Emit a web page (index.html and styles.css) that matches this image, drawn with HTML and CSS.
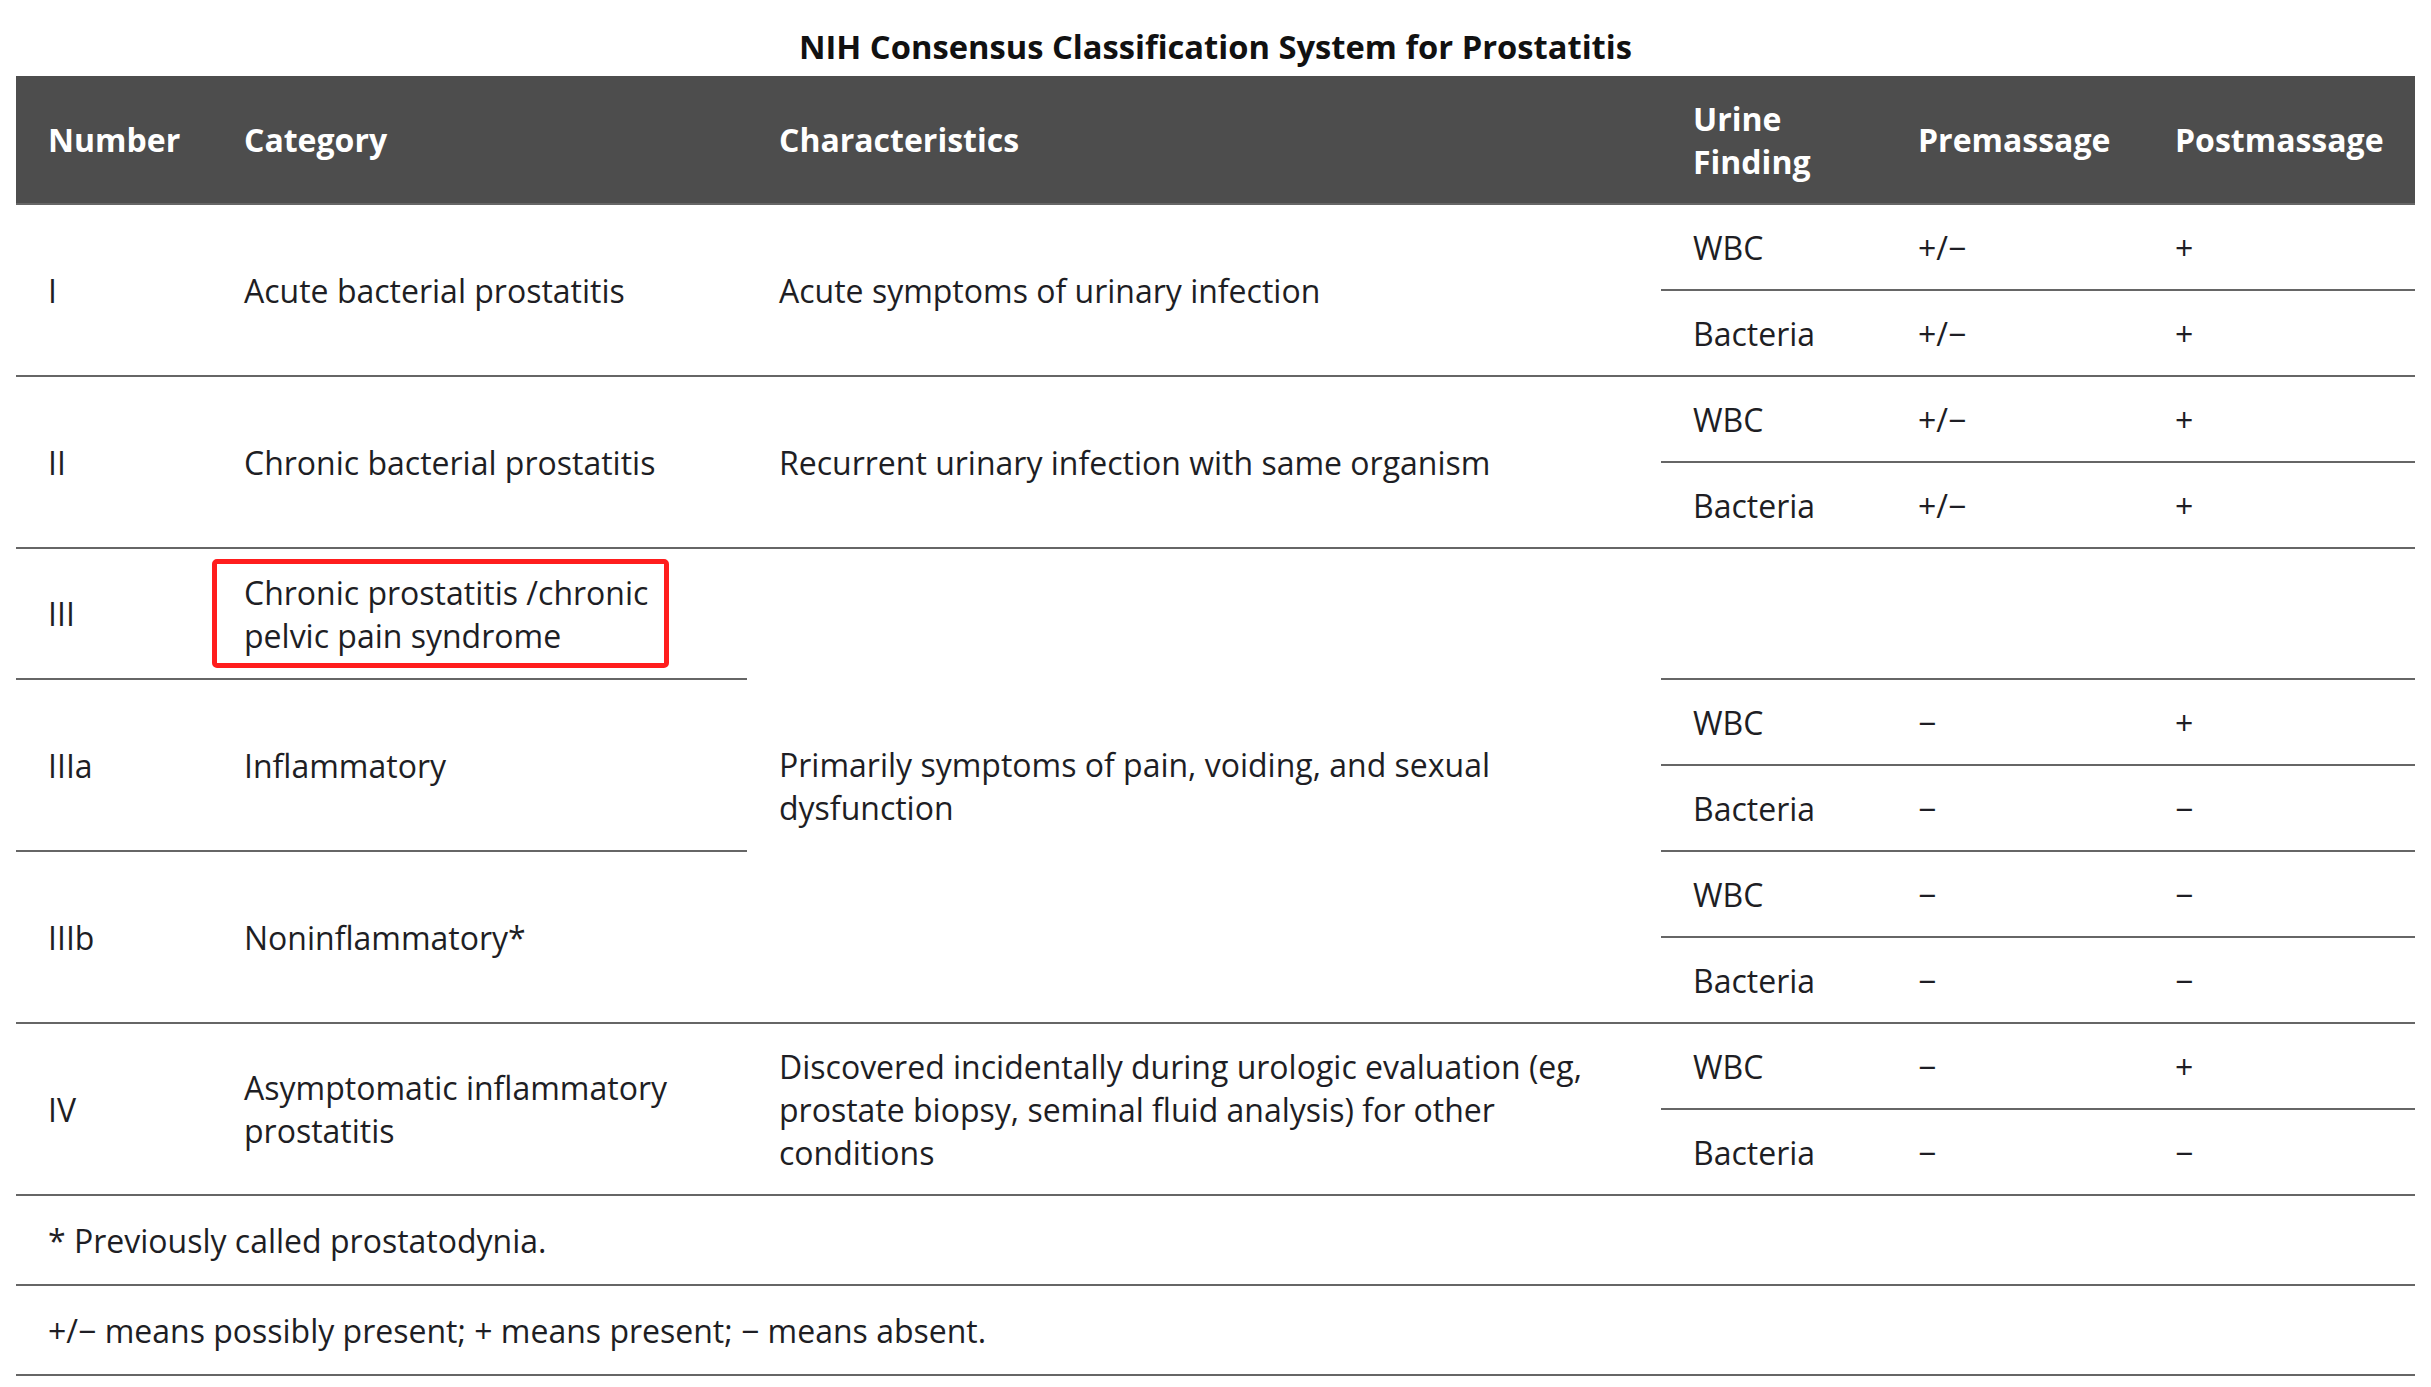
FILE: index.html
```html
<!DOCTYPE html>
<html lang="en">
<head>
<meta charset="utf-8">
<title>NIH Consensus Classification System for Prostatitis</title>
<link rel="stylesheet" href="styles.css">
</head>
<body>
<div class="page">
  <table class="nih">
    <caption class="nih-title">NIH Consensus Classification System for Prostatitis</caption>
    <colgroup>
      <col class="c-num">
      <col class="c-cat">
      <col class="c-char">
      <col class="c-urine">
      <col class="c-pre">
      <col class="c-post">
    </colgroup>
    <thead>
      <tr>
        <th>Number</th>
        <th>Category</th>
        <th>Characteristics</th>
        <th>Urine<br>Finding</th>
        <th>Premassage</th>
        <th>Postmassage</th>
      </tr>
    </thead>
    <tbody>
      <tr>
        <td rowspan="2">I</td>
        <td rowspan="2">Acute bacterial prostatitis</td>
        <td rowspan="2">Acute symptoms of urinary infection</td>
        <td>WBC</td><td>+/−</td><td>+</td>
      </tr>
      <tr>
        <td>Bacteria</td><td>+/−</td><td>+</td>
      </tr>
      <tr>
        <td rowspan="2">II</td>
        <td rowspan="2">Chronic bacterial prostatitis</td>
        <td rowspan="2">Recurrent urinary infection with same organism</td>
        <td>WBC</td><td>+/−</td><td>+</td>
      </tr>
      <tr>
        <td>Bacteria</td><td>+/−</td><td>+</td>
      </tr>
      <tr>
        <td>III</td>
        <td class="cell-hl"><div class="hl-box">Chronic prostatitis /chronic pelvic pain syndrome</div></td>
        <td rowspan="5">Primarily symptoms of pain, voiding, and sexual dysfunction</td>
        <td></td><td></td><td></td>
      </tr>
      <tr>
        <td rowspan="2">IIIa</td>
        <td rowspan="2">Inflammatory</td>
        <td>WBC</td><td>−</td><td>+</td>
      </tr>
      <tr>
        <td>Bacteria</td><td>−</td><td>−</td>
      </tr>
      <tr>
        <td rowspan="2">IIIb</td>
        <td rowspan="2">Noninflammatory*</td>
        <td>WBC</td><td>−</td><td>−</td>
      </tr>
      <tr>
        <td>Bacteria</td><td>−</td><td>−</td>
      </tr>
      <tr>
        <td rowspan="2">IV</td>
        <td rowspan="2">Asymptomatic inflammatory prostatitis</td>
        <td rowspan="2">Discovered incidentally during urologic evaluation (eg, prostate biopsy, seminal fluid analysis) for other conditions</td>
        <td>WBC</td><td>−</td><td>+</td>
      </tr>
      <tr>
        <td>Bacteria</td><td>−</td><td>−</td>
      </tr>
    </tbody>
    <tfoot>
      <tr><td colspan="6">* Previously called prostatodynia.</td></tr>
      <tr><td colspan="6">+/− means possibly present; + means present; − means absent.</td></tr>
    </tfoot>
  </table>
</div>
</body>
</html>
```

FILE: styles.css
```css
html, body {
  margin: 0;
  padding: 0;
  background: #ffffff;
}

body {
  font-family: "Open Sans", "Noto Sans", "Liberation Sans", sans-serif;
  font-size: 32px;
  line-height: 43px;
  color: #1e1e24;
}

.page {
  padding: 25px 17px 0 16px;
}

.nih {
  width: 100%;
  border-collapse: collapse;
  table-layout: fixed;
}

.nih-title {
  font-size: 32.7px;
  font-weight: 700;
  color: #111111;
  text-align: center;
  padding-bottom: 8px;
}

.c-num { width: 196px; }
.c-cat { width: 535px; }
.c-char { width: 914px; }
.c-urine { width: 225px; }
.c-pre { width: 257px; }
.c-post { width: 272px; }

.nih th {
  background: #4d4d4d;
  color: #ffffff;
  font-weight: 700;
  text-align: left;
  vertical-align: middle;
  padding: 20.5px 31px 20.5px 32px;
  border-bottom: 2px solid #666666;
}

.nih td {
  text-align: left;
  vertical-align: middle;
  padding: 20.5px 31px 20.5px 32px;
  border-bottom: 2px solid #666666;
}

.nih td.cell-hl {
  padding: 10px 0 10px 0;
}

.hl-box {
  width: 412px;
  padding: 6.5px 8px 6.5px 27px;
  border: 5px solid #ff1d1d;
  border-radius: 5px;
}

.nih tfoot td {
  padding-top: 22.5px;
  padding-bottom: 22.5px;
}
```
